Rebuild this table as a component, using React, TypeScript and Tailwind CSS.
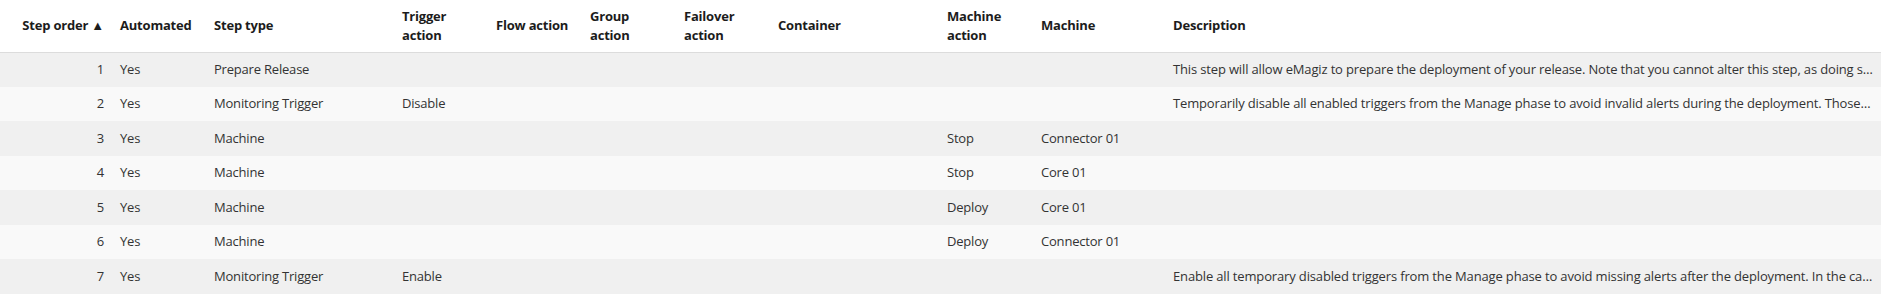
type Step = {
  order: number;
  automated: string;
  type: string;
  trigger?: string;
  machineAction?: string;
  machine?: string;
  description?: string;
};

const steps: Step[] = [
  {
    order: 1,
    automated: "Yes",
    type: "Prepare Release",
    description:
      "This step will allow eMagiz to prepare the deployment of your release. Note that you cannot alter this step, as doing so might break the deployment of your release.",
  },
  {
    order: 2,
    automated: "Yes",
    type: "Monitoring Trigger",
    trigger: "Disable",
    description:
      "Temporarily disable all enabled triggers from the Manage phase to avoid invalid alerts during the deployment. Those triggers will be enabled again at the end.",
  },
  { order: 3, automated: "Yes", type: "Machine", machineAction: "Stop", machine: "Connector 01" },
  { order: 4, automated: "Yes", type: "Machine", machineAction: "Stop", machine: "Core 01" },
  { order: 5, automated: "Yes", type: "Machine", machineAction: "Deploy", machine: "Core 01" },
  { order: 6, automated: "Yes", type: "Machine", machineAction: "Deploy", machine: "Connector 01" },
  {
    order: 7,
    automated: "Yes",
    type: "Monitoring Trigger",
    trigger: "Enable",
    description:
      "Enable all temporary disabled triggers from the Manage phase to avoid missing alerts after the deployment. In the case of a failure these remain disabled.",
  },
];

const headers = [
  { label: "Trigger action", lines: ["Trigger", "action"] },
  { label: "Flow action", lines: ["Flow action"] },
  { label: "Group action", lines: ["Group", "action"] },
  { label: "Failover action", lines: ["Failover", "action"] },
  { label: "Container", lines: ["Container"] },
  { label: "Machine action", lines: ["Machine", "action"] },
  { label: "Machine", lines: ["Machine"] },
];

export default function App() {
  return (
    <div className="w-full bg-white" style={{ fontFamily: '"Open Sans", "Noto Sans", sans-serif' }}>
      <table className="w-full table-fixed border-collapse text-[13px] tracking-[-0.2px] text-[#333333]">
        <colgroup>
          <col className="w-[112px]" />
          <col className="w-[94px]" />
          <col className="w-[188px]" />
          <col className="w-[94px]" />
          <col className="w-[94px]" />
          <col className="w-[94px]" />
          <col className="w-[94px]" />
          <col className="w-[169px]" />
          <col className="w-[94px]" />
          <col className="w-[132px]" />
          <col />
        </colgroup>
        <thead>
          <tr className="h-[52px] border-b border-[#dcdcdc]">
            <th className="px-2 text-right font-bold leading-[19px] text-[#1c1c1c]">Step order ▲</th>
            <th className="px-2 text-left font-bold leading-[19px] text-[#1c1c1c]">Automated</th>
            <th className="px-2 text-left font-bold leading-[19px] text-[#1c1c1c]">Step type</th>
            {headers.map((h) => (
              <th key={h.label} className="px-2 text-left font-bold leading-[19px] text-[#1c1c1c]">
                {h.lines.map((l) => (
                  <div key={l}>{l}</div>
                ))}
              </th>
            ))}
            <th className="px-2 text-left font-bold leading-[19px] text-[#1c1c1c]">Description</th>
          </tr>
        </thead>
        <tbody>
          {steps.map((s) => (
            <tr
              key={s.order}
              className={`h-[34.5px] ${s.order % 2 === 1 ? "bg-[#f0f0f0]" : "bg-[#f9f9f9]"}`}
            >
              <td className="px-2 text-right">{s.order}</td>
              <td className="px-2">{s.automated}</td>
              <td className="px-2">{s.type}</td>
              <td className="px-2">{s.trigger}</td>
              <td className="px-2"></td>
              <td className="px-2"></td>
              <td className="px-2"></td>
              <td className="px-2"></td>
              <td className="px-2">{s.machineAction}</td>
              <td className="px-2">{s.machine}</td>
              <td className="truncate px-2 tracking-[-0.15px]">{s.description}</td>
            </tr>
          ))}
        </tbody>
      </table>
    </div>
  );
}
